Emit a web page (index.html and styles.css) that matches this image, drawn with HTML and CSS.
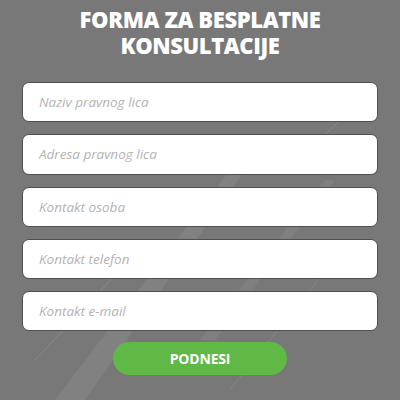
FILE: index.html
```html
<!DOCTYPE html>
<html>
<head>
<meta charset="utf-8">
<link rel="stylesheet" href="styles.css">
</head>
<body>
<div class="page">
  <svg class="stripes" width="400" height="400" viewBox="0 0 400 400">
    <polygon points="55,400 85,400 245,170 230,170" fill="#ffffff" opacity="0.07"/>
    <polygon points="200,340 215,340 335,180 325,180" fill="#ffffff" opacity="0.06"/>
    <line x1="35" y1="360" x2="120" y2="270" stroke="#ffffff" stroke-width="1" opacity="0.12"/>
    <line x1="230" y1="390" x2="350" y2="240" stroke="#ffffff" stroke-width="1" opacity="0.1"/>
    <line x1="300" y1="160" x2="340" y2="120" stroke="#ffffff" stroke-width="1" opacity="0.1"/>
  </svg>
  <h1 class="title">FORMA ZA BESPLATNE<br>KONSULTACIJE</h1>
  <form class="form">
    <input class="field" type="text" placeholder="Naziv pravnog lica">
    <input class="field" type="text" placeholder="Adresa pravnog lica">
    <input class="field" type="text" placeholder="Kontakt osoba">
    <input class="field" type="text" placeholder="Kontakt telefon">
    <input class="field" type="text" placeholder="Kontakt e-mail">
    <button class="submit" type="button">PODNESI</button>
  </form>
</div>
</body>
</html>
```
FILE: styles.css
```css
html, body {
  margin: 0;
  padding: 0;
}
body {
  background: #787878;
}
.page {
  position: relative;
  width: 400px;
  height: 400px;
  overflow: hidden;
  background: #787878;
  display: flex;
  flex-direction: column;
  align-items: center;
}
.stripes {
  position: absolute;
  left: 0;
  top: 0;
}
.title {
  position: relative;
  margin: 6px 0 0 0;
  font-family: "Open Sans", "Liberation Sans", sans-serif;
  font-weight: 800;
  font-size: 22px;
  line-height: 26px;
  color: #ffffff;
  text-align: center;
  letter-spacing: -0.4px;
}
.form {
  position: relative;
  margin-top: 24px;
  width: 356px;
  display: flex;
  flex-direction: column;
  gap: 12px;
  align-items: center;
}
.field {
  box-sizing: border-box;
  width: 356px;
  height: 40.25px;
  margin: 0;
  border: 1px solid #4f4f4f;
  border-radius: 7px;
  background: #ffffff;
  padding: 0 16px;
  font-family: "Open Sans", "Lato", sans-serif;
  font-style: italic;
  font-weight: 400;
  font-size: 13.5px;
  color: #555;
  outline: none;
}
.field::placeholder {
  color: #b3b3b3;
  font-style: italic;
}
.submit {
  margin-top: -1px;
  width: 174px;
  height: 33px;
  border: none;
  border-radius: 17px;
  background: #60b946;
  color: #ffffff;
  font-family: "Open Sans", "Liberation Sans", sans-serif;
  font-weight: 700;
  font-size: 14px;
  letter-spacing: -0.2px;
  cursor: pointer;
}
```
